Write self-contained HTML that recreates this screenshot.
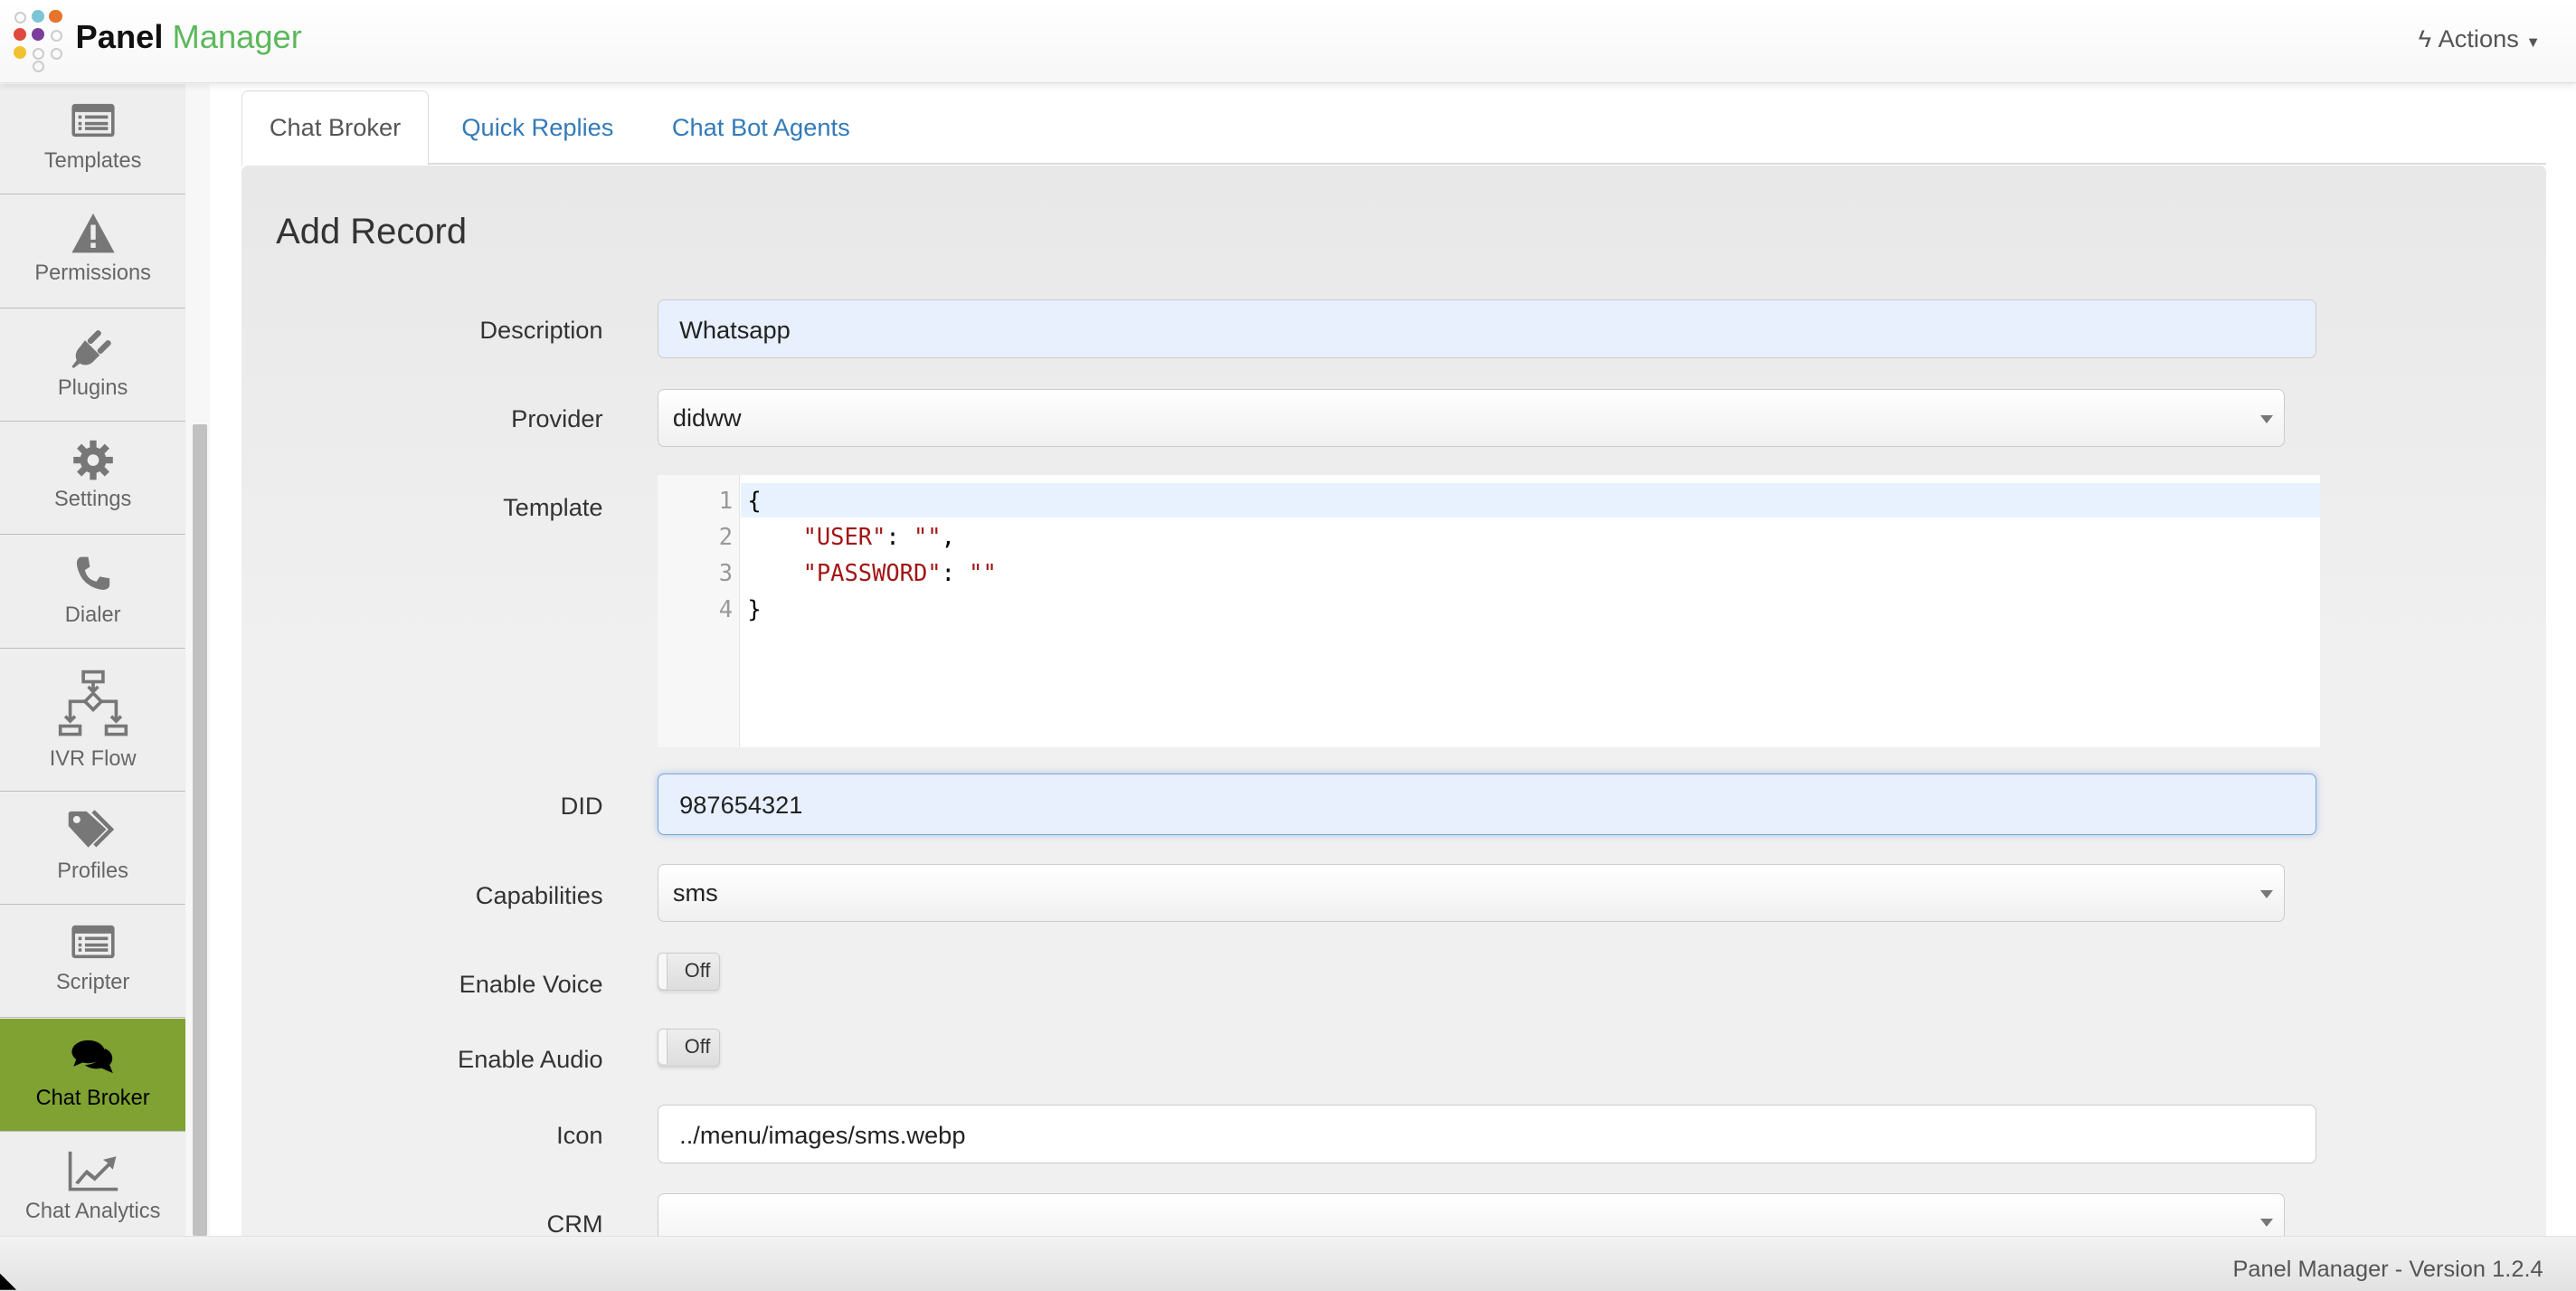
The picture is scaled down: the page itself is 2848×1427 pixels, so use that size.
<!DOCTYPE html>
<html><head><meta charset="utf-8"><style>
html,body{margin:0;padding:0;}
body{width:1568px;height:785px;zoom:1.8163;overflow:hidden;position:relative;font-family:"Liberation Sans",sans-serif;background:#fff;color:#333;}
.abs{position:absolute;}
#hdr{left:0;top:0;width:1568px;height:50px;background:linear-gradient(#fff,#f7f7f7);border-bottom:1px solid #ddd;box-shadow:0 2px 4px rgba(0,0,0,.08);z-index:3;}
.dot{position:absolute;width:5px;height:5px;border-radius:50%;border:1.5px solid #ccc;}
.dotf{border:none;width:8px;height:8px;}
#side{left:0;top:51px;width:113px;height:701px;background:#eeeeee;}
.it{position:absolute;left:0;width:113px;border-bottom:1px solid #bdbdbd;text-align:center;font-size:13px;color:#666;}
.it span{position:absolute;left:0;right:0;}
.it svg{position:absolute;left:50%;transform:translateX(-50%);}
#track{left:113px;top:51px;width:15px;height:701px;background:#f7f7f7;}
#thumb{left:117px;top:258px;width:9px;height:494px;background:#c1c1c1;border-radius:1px;}
.tab{font-size:15px;color:#337ab7;top:69px;}
#panel{left:147px;top:101px;width:1403px;height:660px;background:linear-gradient(#e8e8e8,#f0f0f0 300px);border-radius:4px 4px 0 0;}
.lbl{position:absolute;right:1201px;font-size:15px;color:#333;text-align:right;}
.inp{position:absolute;left:400px;width:1010px;height:34px;border:1px solid #ccc;border-radius:4px;background:#fff;box-sizing:border-box;font-size:15px;line-height:34px;padding-left:13px;color:#222;}
.sel{width:991px;background:linear-gradient(#fff,#f0f0f0);padding-left:9px;}
.sel:after{content:"";position:absolute;right:7px;top:15px;border:4px solid transparent;border-top:5px solid #777;}
.tog{position:absolute;left:400px;width:38px;height:23px;border:1px solid #ccc;border-radius:3px;background:linear-gradient(#eee,#ddd);box-sizing:border-box;font-size:12px;line-height:21px;text-align:right;padding-right:5px;color:#333;box-shadow:0 1px 2px rgba(0,0,0,.1);}
.tog:before{content:"";position:absolute;left:0;top:0;width:5px;height:21px;background:#f7f7f7;border-right:1px solid #ccc;border-radius:3px 0 0 3px;}
.code{font-family:"DejaVu Sans Mono","Liberation Mono",monospace;font-size:14px;}
#foot{left:0;top:752px;width:1568px;height:33px;background:linear-gradient(#f2f2f2,#e2e2e2);border-top:1px solid #e0e0e0;}
</style></head><body>
<div id="hdr" class="abs">
  <div class="dot" style="left:9px;top:7px"></div>
  <div class="dot dotf" style="left:19px;top:6px;background:#7cc5d6"></div>
  <div class="dot dotf" style="left:30px;top:6px;background:#e8732a"></div>
  <div class="dot dotf" style="left:8px;top:17px;background:#e0493c"></div>
  <div class="dot dotf" style="left:19px;top:17px;background:#7a3f9d"></div>
  <div class="dot" style="left:31px;top:18px"></div>
  <div class="dot dotf" style="left:8px;top:28px;background:#f2c12e"></div>
  <div class="dot" style="left:20px;top:29px"></div>
  <div class="dot" style="left:31px;top:29px"></div>
  <div class="dot" style="left:20px;top:40px;top:37px"></div>
  <div class="abs" style="left:46px;top:11px;font-size:20px;font-weight:bold;color:#111">Panel <span style="font-weight:normal;color:#5cb85c">Manager</span></div>
  <div class="abs" style="left:1472px;top:15px;font-size:15px;color:#555">ϟ Actions <span style="font-size:9px">▼</span></div>
</div>
<div id="side" class="abs">
  <div class="it" style="top:0;height:67px">
    <svg style="top:11px" width="28" height="22" viewBox="0 0 28 22"><rect x="1" y="1" width="26" height="20" rx="2" fill="#777"/><rect x="3" y="6" width="22" height="13" fill="#eee"/><g fill="#777"><rect x="5" y="8" width="2" height="2"/><rect x="9" y="8" width="14" height="2"/><rect x="5" y="12" width="2" height="2"/><rect x="9" y="12" width="14" height="2"/><rect x="5" y="15" width="2" height="2"/><rect x="9" y="15" width="14" height="2"/></g></svg>
    <span style="top:40px">Templates</span></div>
  <div class="it" style="top:68px;height:68px">
    <svg style="top:10px" width="28" height="26" viewBox="0 0 28 26"><path d="M14 1 L27 25 H1 Z" fill="#777"/><rect x="12.5" y="8" width="3" height="9" fill="#eee"/><rect x="12.5" y="19" width="3" height="3" fill="#eee"/></svg>
    <span style="top:40px">Permissions</span></div>
  <div class="it" style="top:137px;height:68px">
    <svg style="top:9px" width="28" height="28" viewBox="0 0 28 28"><g fill="#777"><path d="M9 10 L18 19 L14 23 C11 26 7 25 6 24 L2 27 L1 26 L4 22 C3 20 3 17 6 14 Z"/><rect x="13" y="3" width="3.5" height="10" rx="1.5" transform="rotate(45 14.7 8)"/><rect x="19" y="9" width="3.5" height="10" rx="1.5" transform="rotate(45 20.7 14)"/></g></svg>
    <span style="top:41px">Plugins</span></div>
  <div class="it" style="top:206px;height:68px">
    <svg style="top:10px" width="26" height="26" viewBox="0 0 26 26"><g fill="#777"><circle cx="13" cy="13" r="8"/><rect x="11" y="1" width="4" height="24"/><rect x="1" y="11" width="24" height="4"/><rect x="11" y="1" width="4" height="24" transform="rotate(45 13 13)"/><rect x="11" y="1" width="4" height="24" transform="rotate(-45 13 13)"/></g><circle cx="13" cy="13" r="3.5" fill="#eee"/></svg>
    <span style="top:40px">Settings</span></div>
  <div class="it" style="top:275px;height:68px">
    <svg style="top:11px" width="24" height="24" viewBox="0 0 24 24"><path d="M5 2 L9 2 L10 8 L7 10 C8 14 10 16 14 17 L16 14 L22 15 L22 19 C22 21 20 22 18 22 C9 21 3 15 2 6 C2 4 3 2 5 2 Z" fill="#777"/></svg>
    <span style="top:41px">Dialer</span></div>
  <div class="it" style="top:344px;height:86px">
    <svg style="top:12px" width="44" height="44" viewBox="0 0 44 44" fill="none" stroke="#777" stroke-width="2"><rect x="16" y="2" width="12" height="6"/><path d="M22 8 V13 M19 11 L22 14 L25 11"/><path d="M22 15 L27 20 L22 25 L17 20 Z"/><path d="M17 20 H8 V32 M27 20 H36 V32 M5 29 L8 32 L11 29 M33 29 L36 32 L39 29"/><rect x="2" y="35" width="12" height="5"/><rect x="30" y="35" width="12" height="5"/></svg>
    <span style="top:60px">IVR Flow</span></div>
  <div class="it" style="top:431px;height:68px">
    <svg style="top:11px" width="32" height="26" viewBox="0 0 32 26"><path d="M1 2 V10 L13 23 L24 12 L12 1 H2 Z" fill="#777"/><circle cx="6" cy="6" r="2.2" fill="#eee"/><path d="M16 1 L27 12 L17 22" stroke="#777" stroke-width="2.5" fill="none"/></svg>
    <span style="top:41px">Profiles</span></div>
  <div class="it" style="top:500px;height:68px">
    <svg style="top:11px" width="28" height="22" viewBox="0 0 28 22"><rect x="1" y="1" width="26" height="20" rx="2" fill="#777"/><rect x="3" y="6" width="22" height="13" fill="#eee"/><g fill="#777"><rect x="5" y="8" width="2" height="2"/><rect x="9" y="8" width="14" height="2"/><rect x="5" y="12" width="2" height="2"/><rect x="9" y="12" width="14" height="2"/><rect x="5" y="15" width="2" height="2"/><rect x="9" y="15" width="14" height="2"/></g></svg>
    <span style="top:40px">Scripter</span></div>
  <div class="it" style="top:569px;height:68px;background:#7fa232;color:#000">
    <svg style="top:12px" width="28" height="24" viewBox="0 0 28 24"><ellipse cx="11" cy="8" rx="10" ry="7" fill="#000"/><path d="M4 12 L2 17 L9 14 Z" fill="#000"/><path d="M21 6 C26 8 27 13 24 16 L26 21 L19 18 C15 19 11 18 9 16 C15 16 21 12 21 6 Z" fill="#000"/></svg>
    <span style="top:41px">Chat Broker</span></div>
  <div class="it" style="top:638px;height:63px;border:none">
    <svg style="top:11px" width="32" height="26" viewBox="0 0 32 26"><path d="M2 1 V24 H31" stroke="#777" stroke-width="2" fill="none"/><path d="M5 20 L12 12 L17 16 L25 8 L22 6 L30 4 L28 12 L26 10 L17 19 L12 15 L7 21 Z" fill="#777"/></svg>
    <span style="top:41px">Chat Analytics</span></div>
</div>
<div id="track" class="abs"></div>
<div id="thumb" class="abs"></div>

<div class="abs" style="left:147px;top:55px;width:113px;height:45px;border:1px solid #ddd;border-bottom:none;border-radius:4px 4px 0 0;background:#fff;z-index:2"></div>
<div class="abs" style="left:147px;top:99px;width:1403px;height:1px;background:#ddd"></div>
<div class="abs tab" style="left:164px;color:#555;z-index:3">Chat Broker</div>
<div class="abs tab" style="left:281px">Quick Replies</div>
<div class="abs tab" style="left:409px">Chat Bot Agents</div>

<div id="panel" class="abs"></div>
<div class="abs" style="left:168px;top:129px;font-size:22px;color:#333">Add Record</div>

<div class="lbl" style="top:192px">Description</div>
<div class="inp" style="top:182px;height:36px;line-height:36px;background:#e8f0fe">Whatsapp</div>
<div class="lbl" style="top:246px">Provider</div>
<div class="inp sel" style="top:237px;height:35px">didww</div>
<div class="lbl" style="top:300px">Template</div>
<div class="abs" style="left:400px;top:289px;width:1012px;height:166px;background:#fff"></div>
<div class="abs" style="left:400px;top:289px;width:50px;height:166px;background:#f7f7f7;border-right:1px solid #e3e3e3"></div>
<div class="abs" style="left:451px;top:294px;width:961px;height:21px;background:#e8f2ff"></div>
<div class="abs code" style="left:400px;top:294px;width:46px;text-align:right;color:#999;line-height:22px">1<br>2<br>3<br>4</div>
<div class="abs code" style="left:455px;top:294px;line-height:22px;color:#000;white-space:pre">{
    <span style="color:#a31515">"USER"</span>: <span style="color:#a31515">""</span>,
    <span style="color:#a31515">"PASSWORD"</span>: <span style="color:#a31515">""</span>
}</div>
<div class="lbl" style="top:482px">DID</div>
<div class="inp" style="top:471px;height:37px;line-height:37px;background:#e8f0fe;border-color:#7aa7d8;box-shadow:0 0 4px rgba(102,150,220,.5)">987654321</div>
<div class="lbl" style="top:536px">Capabilities</div>
<div class="inp sel" style="top:526px;height:35px">sms</div>
<div class="lbl" style="top:590px">Enable Voice</div>
<div class="tog" style="top:580px">Off</div>
<div class="lbl" style="top:636px">Enable Audio</div>
<div class="tog" style="top:626px">Off</div>
<div class="lbl" style="top:682px">Icon</div>
<div class="inp" style="top:672px;height:36px;line-height:36px">../menu/images/sms.webp</div>
<div class="lbl" style="top:736px">CRM</div>
<div class="inp sel" style="top:726px;height:40px;line-height:40px"></div>

<div id="foot" class="abs"><div class="abs" style="right:20px;top:12px;font-size:14px;color:#555">Panel Manager - Version 1.2.4</div></div>
<div class="abs" style="left:0;top:775px;width:10px;height:10px;background:#000;border-radius:0 10px 0 0;clip-path:polygon(0 0,0 100%,100% 100%)"></div>
</body></html>
